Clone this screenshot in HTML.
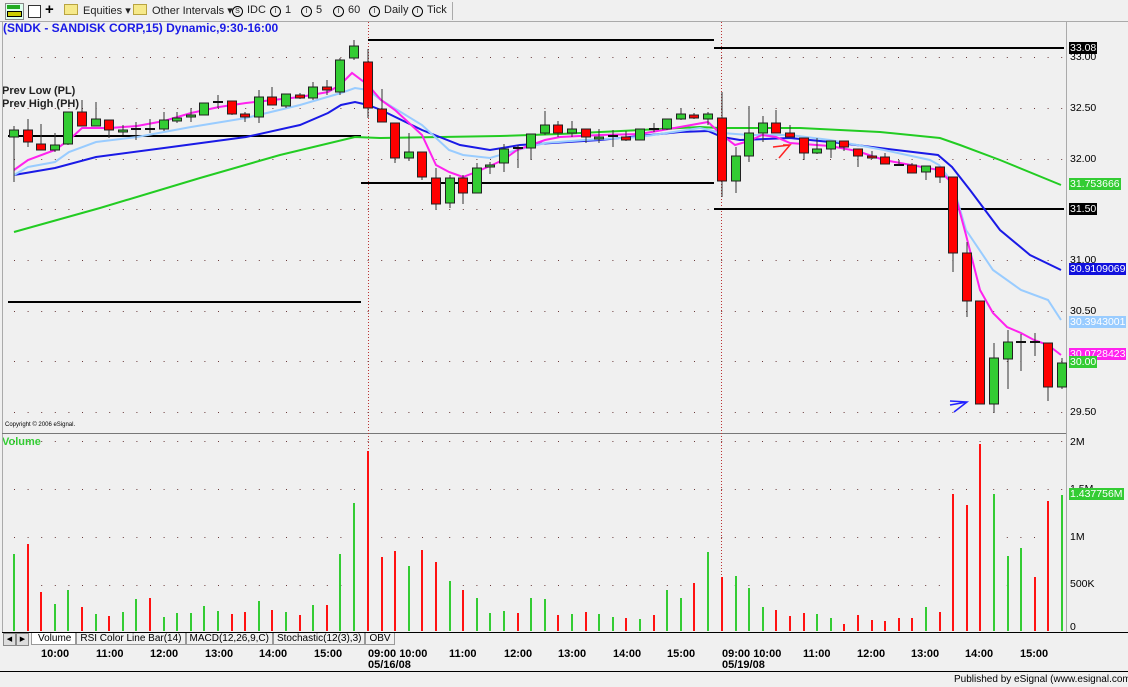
<!DOCTYPE html>
<html><head><meta charset="utf-8"><style>
body{margin:0;width:1128px;height:687px;background:#f0f0f0;overflow:hidden;font-family:"Liberation Sans",sans-serif;position:relative}
.t{position:absolute;white-space:nowrap}
.tb{font-size:11px;color:#222;top:4px}
.ic{display:inline-block;width:9px;height:9px;border:1px solid #000;border-radius:50%;font-size:7px;line-height:9px;text-align:center;margin-right:4px;vertical-align:0px}
.fold{display:inline-block;width:12px;height:9px;background:#f6e98a;border:1px solid #b9a440;margin-right:5px;vertical-align:-1px}
.ax{font-size:10.5px;color:#000;left:1070px;line-height:12px}
.lb{font-size:10.5px;left:1069px;line-height:12px;padding:0 1px}
.tm{font-size:11px;font-weight:bold;color:#000;top:648px}
.tab{padding:0 3px;border:1px solid #999;border-top:none}
</style></head><body>
<div class="t tb" style="left:5px;top:3px;width:17px;height:15px;border:1px solid #888;background:#dfe"></div>
<div class="t" style="left:7px;top:5px;width:13px;height:4px;background:#2a2"></div>
<div class="t" style="left:7px;top:11px;width:13px;height:4px;background:#cc0;border:1px solid #000"></div>
<div class="t" style="left:28px;top:5px;width:11px;height:11px;border:1px solid #333;background:#fff"></div>
<div class="t" style="left:45px;top:1px;font-size:15px;font-weight:bold">+</div>
<div class="t tb" style="left:64px"><span class="fold"></span>Equities ▾</div>
<div class="t tb" style="left:133px"><span class="fold"></span>Other Intervals ▾</div>
<div class="t tb" style="left:232px"><span class="ic">S</span>IDC</div>
<div class="t tb" style="left:270px"><span class="ic">I</span>1</div>
<div class="t tb" style="left:301px"><span class="ic">I</span>5</div>
<div class="t tb" style="left:333px"><span class="ic">I</span>60</div>
<div class="t tb" style="left:369px"><span class="ic">I</span>Daily</div>
<div class="t tb" style="left:412px"><span class="ic">I</span>Tick</div>
<div class="t" style="left:452px;top:2px;width:1px;height:18px;background:#aaa"></div>
<div class="t" style="left:0;top:21px;width:1128px;height:1px;background:#aaa"></div>
<div class="t" style="left:3px;top:21px;font-size:12px;font-weight:bold;color:#1a1ae6">(SNDK - SANDISK CORP,15) Dynamic,9:30-16:00</div>
<div class="t" style="left:2px;top:85px;font-size:11px;font-weight:bold;color:#222">Prev Low (PL)</div>
<div class="t" style="left:2px;top:98px;font-size:11px;font-weight:bold;color:#222">Prev High (PH)</div>
<div class="t" style="left:5px;top:422px;font-size:6px;color:#000">Copyright © 2006 eSignal.</div>
<div class="t" style="left:2px;top:436px;font-size:11px;font-weight:bold;color:#3c3">Volume</div>

<svg class="t" style="left:0;top:0" width="1128" height="687">
<g stroke="#aaa" stroke-width="1"><line x1="2.5" y1="22" x2="2.5" y2="632"/><line x1="1066.5" y1="22" x2="1066.5" y2="632"/></g>
<line x1="2" y1="433.5" x2="1066" y2="433.5" stroke="#777"/>
<line x1="2" y1="632.5" x2="1128" y2="632.5" stroke="#000"/>
<g stroke="#b33" stroke-dasharray="1,2"><line x1="368.5" y1="22" x2="368.5" y2="631"/><line x1="721.5" y1="22" x2="721.5" y2="631"/></g>
<g stroke="#6a3a3a" stroke-width="1" stroke-dasharray="1,12.6">
<line x1="14" y1="57.5" x2="1066" y2="57.5"/><line x1="14" y1="108.5" x2="1066" y2="108.5"/><line x1="14" y1="159.5" x2="1066" y2="159.5"/><line x1="14" y1="209.5" x2="1066" y2="209.5"/><line x1="14" y1="260.5" x2="1066" y2="260.5"/><line x1="14" y1="311.5" x2="1066" y2="311.5"/><line x1="14" y1="361.5" x2="1066" y2="361.5"/><line x1="14" y1="412.5" x2="1066" y2="412.5"/>
<line x1="14" y1="441.5" x2="1066" y2="441.5"/><line x1="14" y1="489.5" x2="1066" y2="489.5"/><line x1="14" y1="537.5" x2="1066" y2="537.5"/><line x1="14" y1="585.5" x2="1066" y2="585.5"/>
</g>
<g stroke="#000" stroke-width="2">
<line x1="8" y1="136" x2="361" y2="136"/><line x1="8" y1="302" x2="361" y2="302"/>
<line x1="368" y1="40" x2="714" y2="40"/><line x1="361" y1="183" x2="714" y2="183"/>
<line x1="714" y1="48" x2="1064" y2="48"/><line x1="714" y1="209" x2="1064" y2="209"/>
</g>
<g fill="none" stroke-width="2">
<polyline stroke="#2c2" points="14,232 100,208 200,178 280,155 355,137 380,138 500,136 560,134 700,127 720,128 800,128 880,132 940,138 960,145 1000,160 1061,185"/>
<polyline stroke="#1a1ae6" points="14,175 55,168 96,157 164,148 246,137 300,125 328,113 341,105 355,102 368,105 381,110 422,130 460,145 490,150 520,145 600,140 680,132 708,131 722,137 740,140 790,138 840,143 880,148 938,155 952,167 970,190 1000,230 1030,255 1061,270"/>
<polyline stroke="#9cf" points="14,175 28,167 55,162 69,152 96,142 137,137 191,127 246,118 300,105 341,93 355,88 368,90 381,100 422,125 449,150 463,155 490,158 517,150 545,143 585,140 640,137 700,128 722,133 749,135 790,135 830,140 884,150 930,160 939,165 952,182 966,230 993,270 1021,290 1048,300 1061,320"/>
<polyline stroke="#f2e" points="14,170 28,160 55,150 69,140 82,128 110,128 137,126 164,121 191,113 219,107 246,103 273,100 300,97 328,92 340,85 352,73 368,85 381,100 395,110 408,122 422,135 436,165 449,172 463,177 476,172 490,166 503,160 517,150 531,145 545,140 560,137 600,135 640,134 680,127 708,122 722,135 735,145 749,141 762,135 776,137 790,143 803,144 830,146 857,151 884,160 911,165 939,170 952,183 966,235 980,290 993,313 1007,327 1021,333 1034,340 1048,345 1061,355"/>
</g>
<g stroke="#333" stroke-width="1">
<line x1="14" y1="126" x2="14" y2="182"/><line x1="28" y1="119" x2="28" y2="147"/><line x1="41" y1="124" x2="41" y2="150"/><line x1="55" y1="133" x2="55" y2="152"/><line x1="68" y1="112" x2="68" y2="145"/><line x1="82" y1="100" x2="82" y2="126"/><line x1="96" y1="102" x2="96" y2="126"/><line x1="109" y1="120" x2="109" y2="138"/><line x1="123" y1="125" x2="123" y2="135"/><line x1="136" y1="122" x2="136" y2="140"/><line x1="150" y1="119" x2="150" y2="133"/><line x1="164" y1="112" x2="164" y2="131"/><line x1="177" y1="112" x2="177" y2="123"/><line x1="191" y1="108" x2="191" y2="122"/><line x1="204" y1="103" x2="204" y2="115"/><line x1="218" y1="95" x2="218" y2="108"/><line x1="232" y1="101" x2="232" y2="115"/><line x1="245" y1="112" x2="245" y2="122"/><line x1="259" y1="90" x2="259" y2="123"/><line x1="272" y1="87" x2="272" y2="105"/><line x1="286" y1="94" x2="286" y2="108"/><line x1="300" y1="93" x2="300" y2="99"/><line x1="313" y1="82" x2="313" y2="100"/><line x1="327" y1="80" x2="327" y2="95"/><line x1="340" y1="58" x2="340" y2="95"/><line x1="354" y1="40" x2="354" y2="60"/>
<line x1="368" y1="49" x2="368" y2="118"/><line x1="382" y1="89" x2="382" y2="122"/><line x1="395" y1="123" x2="395" y2="163"/><line x1="409" y1="133" x2="409" y2="161"/><line x1="422" y1="152" x2="422" y2="180"/><line x1="436" y1="168" x2="436" y2="210"/><line x1="450" y1="175" x2="450" y2="208"/><line x1="463" y1="175" x2="463" y2="204"/><line x1="477" y1="163" x2="477" y2="193"/><line x1="490" y1="162" x2="490" y2="174"/><line x1="504" y1="144" x2="504" y2="172"/><line x1="518" y1="145" x2="518" y2="168"/><line x1="531" y1="134" x2="531" y2="160"/><line x1="545" y1="111" x2="545" y2="135"/><line x1="558" y1="121" x2="558" y2="137"/><line x1="572" y1="121" x2="572" y2="137"/><line x1="586" y1="129" x2="586" y2="143"/><line x1="599" y1="129" x2="599" y2="143"/><line x1="613" y1="130" x2="613" y2="147"/><line x1="626" y1="131" x2="626" y2="141"/><line x1="640" y1="129" x2="640" y2="140"/><line x1="654" y1="123" x2="654" y2="132"/><line x1="667" y1="119" x2="667" y2="130"/><line x1="681" y1="108" x2="681" y2="120"/><line x1="694" y1="113" x2="694" y2="119"/><line x1="708" y1="112" x2="708" y2="125"/>
<line x1="722" y1="92" x2="722" y2="197"/><line x1="736" y1="147" x2="736" y2="193"/><line x1="749" y1="106" x2="749" y2="162"/><line x1="763" y1="116" x2="763" y2="142"/><line x1="776" y1="110" x2="776" y2="133"/><line x1="790" y1="125" x2="790" y2="137"/><line x1="804" y1="138" x2="804" y2="160"/><line x1="817" y1="138" x2="817" y2="154"/><line x1="831" y1="141" x2="831" y2="158"/><line x1="844" y1="141" x2="844" y2="151"/><line x1="858" y1="149" x2="858" y2="167"/><line x1="872" y1="151" x2="872" y2="159"/><line x1="885" y1="153" x2="885" y2="164"/><line x1="899" y1="160" x2="899" y2="166"/><line x1="912" y1="163" x2="912" y2="173"/><line x1="926" y1="166" x2="926" y2="180"/><line x1="940" y1="167" x2="940" y2="183"/><line x1="953" y1="177" x2="953" y2="272"/><line x1="967" y1="242" x2="967" y2="317"/><line x1="980" y1="301" x2="980" y2="404"/><line x1="994" y1="343" x2="994" y2="413"/><line x1="1008" y1="330" x2="1008" y2="389"/><line x1="1021" y1="334" x2="1021" y2="371"/><line x1="1035" y1="333" x2="1035" y2="356"/><line x1="1048" y1="343" x2="1048" y2="401"/><line x1="1062" y1="358" x2="1062" y2="389"/>
</g>
<g stroke="#222" stroke-width="1">
<g fill="#3c3">
<rect x="9.5" y="130" width="9" height="7"/><rect x="50.5" y="145" width="9" height="5"/><rect x="63.5" y="112" width="9" height="32"/><rect x="91.5" y="119" width="9" height="7"/><rect x="118.5" y="130" width="9" height="2"/><rect x="159.5" y="120" width="9" height="9"/><rect x="172.5" y="118" width="9" height="3"/><rect x="186.5" y="115" width="9" height="2"/><rect x="199.5" y="103" width="9" height="12"/><rect x="254.5" y="97" width="9" height="20"/><rect x="281.5" y="94" width="9" height="12"/><rect x="308.5" y="87" width="9" height="11"/><rect x="335.5" y="60" width="9" height="32"/><rect x="349.5" y="46" width="9" height="12"/>
<rect x="404.5" y="152" width="9" height="6"/><rect x="445.5" y="178" width="9" height="25"/><rect x="472.5" y="168" width="9" height="25"/><rect x="485.5" y="165" width="9" height="2"/><rect x="499.5" y="149" width="9" height="14"/><rect x="526.5" y="134" width="9" height="14"/><rect x="540.5" y="125" width="9" height="8"/><rect x="567.5" y="129" width="9" height="4"/><rect x="594.5" y="137" width="9" height="2"/><rect x="635.5" y="129" width="9" height="11"/><rect x="662.5" y="119" width="9" height="10"/><rect x="676.5" y="114" width="9" height="5"/><rect x="703.5" y="114" width="9" height="5"/>
<rect x="731.5" y="156" width="9" height="25"/><rect x="744.5" y="133" width="9" height="23"/><rect x="758.5" y="123" width="9" height="10"/><rect x="812.5" y="149" width="9" height="4"/><rect x="826.5" y="141" width="9" height="8"/><rect x="921.5" y="166" width="9" height="6"/><rect x="989.5" y="358" width="9" height="46"/><rect x="1003.5" y="342" width="9" height="17"/><rect x="1057.5" y="363" width="9" height="24"/>
</g>
<g fill="#f00">
<rect x="23.5" y="130" width="9" height="12"/><rect x="36.5" y="144" width="9" height="6"/><rect x="77.5" y="112" width="9" height="14"/><rect x="104.5" y="120" width="9" height="10"/><rect x="227.5" y="101" width="9" height="13"/><rect x="240.5" y="114" width="9" height="3"/><rect x="267.5" y="97" width="9" height="8"/><rect x="295.5" y="95" width="9" height="3"/><rect x="322.5" y="87" width="9" height="3"/>
<rect x="363.5" y="62" width="9" height="46"/><rect x="377.5" y="109" width="9" height="13"/><rect x="390.5" y="123" width="9" height="35"/><rect x="417.5" y="152" width="9" height="25"/><rect x="431.5" y="178" width="9" height="26"/><rect x="458.5" y="178" width="9" height="15"/><rect x="553.5" y="125" width="9" height="8"/><rect x="581.5" y="129" width="9" height="8"/><rect x="621.5" y="137" width="9" height="3"/><rect x="689.5" y="115" width="9" height="3"/>
<rect x="717.5" y="118" width="9" height="63"/><rect x="771.5" y="123" width="9" height="10"/><rect x="785.5" y="133" width="9" height="4"/><rect x="799.5" y="138" width="9" height="15"/><rect x="839.5" y="141" width="9" height="6"/><rect x="853.5" y="149" width="9" height="7"/><rect x="867.5" y="156" width="9" height="2"/><rect x="880.5" y="157" width="9" height="7"/><rect x="907.5" y="165" width="9" height="8"/><rect x="935.5" y="167" width="9" height="10"/><rect x="948.5" y="177" width="9" height="76"/><rect x="962.5" y="253" width="9" height="48"/><rect x="975.5" y="301" width="9" height="103"/><rect x="1043.5" y="343" width="9" height="44"/>
</g>
</g>
<g stroke="#111" stroke-width="2">
<line x1="131" y1="129" x2="141" y2="129"/><line x1="145" y1="129" x2="155" y2="129"/><line x1="213" y1="102" x2="223" y2="102"/><line x1="513" y1="148" x2="523" y2="148"/><line x1="608" y1="136" x2="618" y2="136"/><line x1="649" y1="129" x2="659" y2="129"/><line x1="894" y1="165" x2="904" y2="165"/><line x1="1016" y1="342" x2="1026" y2="342"/><line x1="1030" y1="342" x2="1040" y2="342"/>
</g>
<g fill="none" stroke-width="1.5"><path d="M773 147 L790 145 L779 158 M783 145 L790 145" stroke="#f22"/><path d="M950 401 L967 402 L954 412 M950 405 L967 402" stroke="#22f"/></g>
<g stroke-width="2">
<g stroke="#3c3"><line x1="14" y1="554" x2="14" y2="631"/><line x1="55" y1="604" x2="55" y2="631"/><line x1="68" y1="590" x2="68" y2="631"/><line x1="96" y1="614" x2="96" y2="631"/><line x1="123" y1="612" x2="123" y2="631"/><line x1="136" y1="599" x2="136" y2="631"/><line x1="164" y1="617" x2="164" y2="631"/><line x1="177" y1="613" x2="177" y2="631"/><line x1="191" y1="613" x2="191" y2="631"/><line x1="204" y1="606" x2="204" y2="631"/><line x1="218" y1="611" x2="218" y2="631"/><line x1="259" y1="601" x2="259" y2="631"/><line x1="286" y1="612" x2="286" y2="631"/><line x1="313" y1="605" x2="313" y2="631"/><line x1="340" y1="554" x2="340" y2="631"/><line x1="354" y1="503" x2="354" y2="631"/>
<line x1="409" y1="566" x2="409" y2="631"/><line x1="450" y1="581" x2="450" y2="631"/><line x1="477" y1="598" x2="477" y2="631"/><line x1="490" y1="613" x2="490" y2="631"/><line x1="504" y1="611" x2="504" y2="631"/><line x1="531" y1="598" x2="531" y2="631"/><line x1="545" y1="599" x2="545" y2="631"/><line x1="572" y1="614" x2="572" y2="631"/><line x1="599" y1="614" x2="599" y2="631"/><line x1="613" y1="617" x2="613" y2="631"/><line x1="640" y1="619" x2="640" y2="631"/><line x1="667" y1="590" x2="667" y2="631"/><line x1="681" y1="598" x2="681" y2="631"/><line x1="708" y1="552" x2="708" y2="631"/>
<line x1="736" y1="576" x2="736" y2="631"/><line x1="749" y1="588" x2="749" y2="631"/><line x1="763" y1="607" x2="763" y2="631"/><line x1="817" y1="614" x2="817" y2="631"/><line x1="831" y1="618" x2="831" y2="631"/><line x1="926" y1="607" x2="926" y2="631"/><line x1="994" y1="494" x2="994" y2="631"/><line x1="1008" y1="556" x2="1008" y2="631"/><line x1="1021" y1="548" x2="1021" y2="631"/><line x1="1062" y1="495" x2="1062" y2="631"/></g>
<g stroke="#f11"><line x1="28" y1="544" x2="28" y2="631"/><line x1="41" y1="592" x2="41" y2="631"/><line x1="82" y1="607" x2="82" y2="631"/><line x1="109" y1="616" x2="109" y2="631"/><line x1="150" y1="598" x2="150" y2="631"/><line x1="232" y1="614" x2="232" y2="631"/><line x1="245" y1="612" x2="245" y2="631"/><line x1="272" y1="610" x2="272" y2="631"/><line x1="300" y1="615" x2="300" y2="631"/><line x1="327" y1="605" x2="327" y2="631"/>
<line x1="368" y1="451" x2="368" y2="631"/><line x1="382" y1="557" x2="382" y2="631"/><line x1="395" y1="551" x2="395" y2="631"/><line x1="422" y1="550" x2="422" y2="631"/><line x1="436" y1="562" x2="436" y2="631"/><line x1="463" y1="590" x2="463" y2="631"/><line x1="518" y1="613" x2="518" y2="631"/><line x1="558" y1="615" x2="558" y2="631"/><line x1="586" y1="612" x2="586" y2="631"/><line x1="626" y1="618" x2="626" y2="631"/><line x1="654" y1="615" x2="654" y2="631"/><line x1="694" y1="583" x2="694" y2="631"/>
<line x1="722" y1="577" x2="722" y2="631"/><line x1="776" y1="610" x2="776" y2="631"/><line x1="790" y1="616" x2="790" y2="631"/><line x1="804" y1="613" x2="804" y2="631"/><line x1="844" y1="624" x2="844" y2="631"/><line x1="858" y1="615" x2="858" y2="631"/><line x1="872" y1="620" x2="872" y2="631"/><line x1="885" y1="621" x2="885" y2="631"/><line x1="899" y1="618" x2="899" y2="631"/><line x1="912" y1="618" x2="912" y2="631"/><line x1="940" y1="612" x2="940" y2="631"/><line x1="953" y1="494" x2="953" y2="631"/><line x1="967" y1="505" x2="967" y2="631"/><line x1="980" y1="444" x2="980" y2="631"/><line x1="1035" y1="577" x2="1035" y2="631"/><line x1="1048" y1="501" x2="1048" y2="631"/></g>
</g>
<line x1="0" y1="671.5" x2="1128" y2="671.5" stroke="#000"/>
</svg>

<div class="t ax" style="top:51px">33.00</div>
<div class="t lb" style="top:42px;background:#000;color:#fff">33.08</div>
<div class="t ax" style="top:102px">32.50</div>
<div class="t ax" style="top:153px">32.00</div>
<div class="t lb" style="top:178px;background:#3c3;color:#fff">31.753666</div>
<div class="t lb" style="top:203px;background:#000;color:#fff">31.50</div>
<div class="t ax" style="top:254px">31.00</div>
<div class="t lb" style="top:263px;background:#11d;color:#fff">30.9109069</div>
<div class="t ax" style="top:305px">30.50</div>
<div class="t lb" style="top:316px;background:#9cf;color:#fff">30.3943001</div>
<div class="t lb" style="top:348px;background:#f2e;color:#fff">30.0728423</div>
<div class="t lb" style="top:356px;background:#3c3;color:#fff">30.00</div>
<div class="t ax" style="top:406px">29.50</div>
<div class="t ax" style="top:436px">2M</div>
<div class="t ax" style="top:483px">1.5M</div>
<div class="t lb" style="top:488px;background:#3c3;color:#fff">1.437756M</div>
<div class="t ax" style="top:531px">1M</div>
<div class="t ax" style="top:578px">500K</div>
<div class="t ax" style="top:621px">0</div>

<div class="t" style="left:3px;top:633px;width:11px;height:11px;border:1px solid #888;background:#ddd;font-size:7px;text-align:center;line-height:11px">◀</div>
<div class="t" style="left:16px;top:633px;width:11px;height:11px;border:1px solid #888;background:#ddd;font-size:7px;text-align:center;line-height:11px">▶</div>
<div class="t" style="left:31px;top:633px;font-size:10px;color:#000;line-height:12px">
<span class="tab" style="background:#fff;padding:0 4px 0 6px">Volume</span><span class="tab">RSI Color Line Bar(14)</span><span class="tab">MACD(12,26,9,C)</span><span class="tab">Stochastic(12(3),3)</span><span class="tab">OBV</span></div>
<div class="t tm" style="left:41px">10:00</div><div class="t tm" style="left:96px">11:00</div><div class="t tm" style="left:150px">12:00</div><div class="t tm" style="left:205px">13:00</div><div class="t tm" style="left:259px">14:00</div><div class="t tm" style="left:314px">15:00</div>
<div class="t tm" style="left:368px">09:00 10:00</div><div class="t tm" style="left:368px;top:659px">05/16/08</div>
<div class="t tm" style="left:449px">11:00</div><div class="t tm" style="left:504px">12:00</div><div class="t tm" style="left:558px">13:00</div><div class="t tm" style="left:613px">14:00</div><div class="t tm" style="left:667px">15:00</div>
<div class="t tm" style="left:722px">09:00 10:00</div><div class="t tm" style="left:722px;top:659px">05/19/08</div>
<div class="t tm" style="left:803px">11:00</div><div class="t tm" style="left:857px">12:00</div><div class="t tm" style="left:911px">13:00</div><div class="t tm" style="left:965px">14:00</div><div class="t tm" style="left:1020px">15:00</div>
<div class="t" style="left:954px;top:674px;font-size:10px;color:#000">Published by eSignal (www.esignal.com)</div>
</body></html>
